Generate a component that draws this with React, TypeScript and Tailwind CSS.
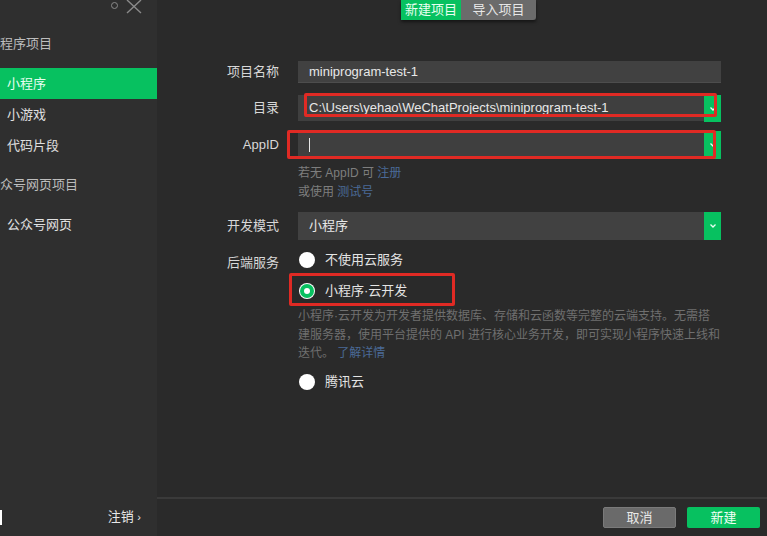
import React from 'react';

const font = { fontFamily: '"Liberation Sans", "Noto Sans CJK SC", sans-serif' };

const Chevron = () => (
  <svg width="8" height="6" viewBox="0 0 8 6" fill="none">
    <path d="M1.5 1.5 L4 4 L6.5 1.5" stroke="#e8fff2" strokeWidth="1.3" />
  </svg>
);

const SideItem: React.FC<{ label: string; active?: boolean }> = ({ label, active }) => (
  <div className={`h-[31px] flex items-center pl-[7px] text-[13px] ${active ? 'bg-[#07c160] text-[#e6fff0]' : 'text-[#e0e0e0]'}`}>
    {label}
  </div>
);

const Radio: React.FC<{ label: string; checked?: boolean }> = ({ label, checked }) => (
  <div className="flex items-center h-[20px]">
    <div className="w-[16px] h-[16px] rounded-full bg-white flex items-center justify-center">
      {checked && <div className="w-[14px] h-[14px] rounded-full bg-[#07c160] flex items-center justify-center"><div className="w-[6px] h-[6px] rounded-full bg-white" /></div>}
    </div>
    <span className="ml-[10px] text-[13px] text-[#e4e4e4]">{label}</span>
  </div>
);

export default function App() {
  return (
    <div className="w-[767px] h-[536px] flex overflow-hidden" style={font}>
      {/* Sidebar */}
      <div className="w-[157px] bg-[#2f2f2f] flex flex-col shrink-0">
        <div className="h-[20px] flex items-start justify-end pr-[15px] gap-[8px]">
          <div className="w-[7px] h-[7px] rounded-full border border-[#8a8a8a] mt-[2px]" />
          <svg width="16" height="14" viewBox="0 0 16 14">
            <path d="M1 0 L15 13 M15 0 L1 13" stroke="#8a8a8a" strokeWidth="1.4" />
          </svg>
        </div>
        <div className="h-[48px] flex items-center text-[13px] text-[#bdbdbd]">程序项目</div>
        <SideItem label="小程序" active />
        <SideItem label="小游戏" />
        <SideItem label="代码片段" />
        <div className="h-[48px] flex items-center text-[13px] text-[#bdbdbd]">众号网页项目</div>
        <SideItem label="公众号网页" />
        <div className="flex-1" />
        <div className="h-[30px] mb-[4px] flex items-center justify-between">
          <div className="w-[2px] h-[15px] bg-white" />
          <div className="text-[13px] text-[#e8e8e8] pr-[16px]">注销 <span className="text-[11px]">›</span></div>
        </div>
      </div>

      {/* Main */}
      <div className="flex-1 bg-[#2a2a2a] flex flex-col relative">
        <div className="flex ml-[244px] h-[20px] shadow-[0_2px_3px_rgba(0,0,0,0.5)] w-fit">
          <div className="w-[60px] bg-[#07c160] text-[13px] text-[#e8fff1] flex items-center justify-center">新建项目</div>
          <div className="w-[75px] bg-[#6b6b6b] text-[13px] text-[#e6e6e6] flex items-center justify-center rounded-br-[3px]">导入项目</div>
        </div>

        <div className="flex flex-col mt-[41px]">
          {/* 项目名称 */}
          <div className="flex items-center h-[22px]">
            <div className="w-[122px] text-right text-[13px] text-[#d8d8d8]">项目名称</div>
            <div className="ml-[19px] w-[423px] h-[22px] bg-[#414141] border-b border-[#4d4d4d] flex items-center pl-[11px] text-[13px] text-[#e8e8e8]">miniprogram-test-1</div>
          </div>

          {/* 目录 */}
          <div className="flex items-center h-[26px] mt-[12px]">
            <div className="w-[122px] text-right text-[13px] text-[#d8d8d8]">目录</div>
            <div className="ml-[19px] w-[423px] h-[26px] bg-[#3f3f3f] flex items-center relative">
              <span className="pl-[11px] text-[13px] text-[#e8e8e8]">C:\Users\yehao\WeChatProjects\miniprogram-test-1</span>
              <div className="absolute right-0 top-0 w-[17px] h-[27px] bg-[#07c160] flex items-center justify-center"><Chevron /></div>
              <div className="absolute left-[6px] top-[-2px] w-[413px] h-[24px] border-[3px] border-[#e02a24] rounded-[2px]" />
            </div>
          </div>

          {/* AppID */}
          <div className="flex items-center h-[28px] mt-[10px]">
            <div className="w-[122px] text-right text-[13px] text-[#d8d8d8]">AppID</div>
            <div className="ml-[19px] w-[423px] h-[28px] bg-[#3f3f3f] flex items-center relative">
              <span className="ml-[11px] w-[1px] h-[14px] bg-[#e8e8e8]" />
              <div className="absolute right-0 top-0 w-[17px] h-[28px] bg-[#07c160] flex items-center justify-center"><Chevron /></div>
              <div className="absolute left-[-11px] top-[-1px] w-[429px] h-[29px] border-[3px] border-[#e02a24] rounded-[2px]" />
            </div>
          </div>

          {/* hint */}
          <div className="ml-[141px] mt-[5px] text-[12px] leading-[19px] text-[#7e7e7e]">
            <div>若无 AppID 可 <span className="text-[#4a6a98]">注册</span></div>
            <div>或使用 <span className="text-[#4a6a98]">测试号</span></div>
          </div>

          {/* 开发模式 */}
          <div className="flex items-center h-[28px] mt-[10px]">
            <div className="w-[122px] text-right text-[13px] text-[#d8d8d8]">开发模式</div>
            <div className="ml-[19px] w-[423px] h-[28px] bg-[#414141] flex items-center relative">
              <span className="pl-[11px] text-[13px] text-[#e8e8e8]">小程序</span>
              <div className="absolute right-0 top-0 w-[17px] h-[28px] bg-[#07c160] flex items-center justify-center"><Chevron /></div>
            </div>
          </div>

          {/* 后端服务 */}
          <div className="flex mt-[10px]">
            <div className="w-[122px] text-right text-[13px] text-[#d8d8d8] leading-[20px] pt-[3px]">后端服务</div>
            <div className="ml-[19px] w-[423px] flex flex-col">
              <div className="pl-[1px]"><Radio label="不使用云服务" /></div>
              <div className="pl-[1px] mt-[11px] relative">
                <Radio label="小程序·云开发" checked />
                <div className="absolute left-[-9px] top-[-8px] w-[166px] h-[33px] border-[3px] border-[#e02a24] rounded-[2px]" />
              </div>
              <div className="mt-[6px] text-[12px] leading-[18.5px] text-[#6f6f6f] w-[440px] whitespace-nowrap">
                小程序·云开发为开发者提供数据库、存储和云函数等完整的云端支持。无需搭<br />
                建服务器，使用平台提供的 API 进行核心业务开发，即可实现小程序快速上线和<br />
                迭代。 <span className="text-[#4a6a98]">了解详情</span>
              </div>
              <div className="pl-[1px] mt-[9px]"><Radio label="腾讯云" /></div>
            </div>
          </div>
        </div>

        <div className="flex-1" />
        {/* footer */}
        <div className="border-t-2 border-[#3a3a3a] h-[39px] flex items-center justify-end gap-[11px] pr-[7px]">
          <div className="w-[73px] h-[21px] bg-[#6a6a6a] border border-[#7a7a7a] rounded-[2px] flex items-center justify-center text-[13px] text-[#e8e8e8]">取消</div>
          <div className="w-[73px] h-[21px] bg-[#07c160] rounded-[2px] flex items-center justify-center text-[13px] text-[#effff5]">新建</div>
        </div>
      </div>
    </div>
  );
}
